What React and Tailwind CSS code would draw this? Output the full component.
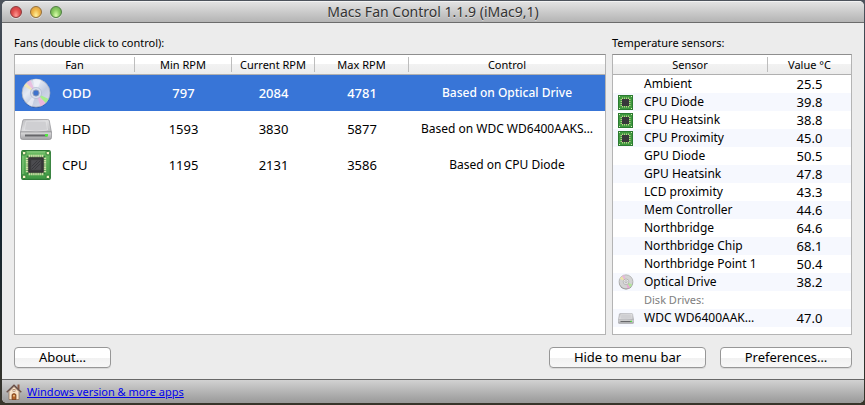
import React from "react";

function DiscIcon({ className }) {
  return (
    <svg viewBox="0 0 30 30" className={className} aria-hidden="true">
      <defs>
        <linearGradient id="disc" x1="0" y1="0" x2="1" y2="1">
          <stop offset="0" stopColor="#b9c3da" />
          <stop offset="0.35" stopColor="#e6eaf3" />
          <stop offset="0.6" stopColor="#c3cce0" />
          <stop offset="1" stopColor="#dfe4ee" />
        </linearGradient>
      </defs>
      <circle cx="15" cy="15.6" r="14.2" fill="#22325a" opacity="0.35" />
      <circle cx="15" cy="15" r="14" fill="url(#disc)" stroke="#a9afbd" strokeWidth="0.7" />
      <path d="M15 15 L3 8 A14 14 0 0 1 5.5 5 Z" fill="#f1e6b4" />
      <path d="M15 15 L5.5 5 A14 14 0 0 1 9.5 2.2 Z" fill="#e9bfe0" />
      <path d="M15 15 L27.6 21 A14 14 0 0 1 24.5 25 Z" fill="#a6ee8c" />
      <path d="M15 15 L24.5 25 A14 14 0 0 1 19.5 28.2 Z" fill="#ecb6dc" />
      <path d="M15 15 L12 1.4 A14 14 0 0 1 20 2 Z" fill="#f5f7fb" opacity="0.7" />
      <path d="M15 15 L11 28.4 A14 14 0 0 1 6 25.6 Z" fill="#f5f7fb" opacity="0.6" />
      <circle cx="15" cy="15" r="5.6" fill="#d9dfec" stroke="#aab4cb" strokeWidth="0.6" />
      <circle cx="15" cy="15" r="3.1" fill="#3f73cd" stroke="#8d9bb8" strokeWidth="1" />
    </svg>
  );
}

function SmallDiscIcon() {
  return (
    <svg viewBox="0 0 16 16" className="block size-4" aria-hidden="true">
      <circle cx="8" cy="8.6" r="7" fill="#8b8b8b" />
      <circle cx="8" cy="7.8" r="7" fill="#d3d3d3" stroke="#a3a3a3" strokeWidth="0.6" />
      <path d="M8 7.8 L1.8 4.8 A7 7 0 0 1 4 2.2 Z" fill="#eee3a8" />
      <path d="M8 7.8 L4 2.2 A7 7 0 0 1 6.5 1.1 Z" fill="#e7b8d9" />
      <path d="M8 7.8 L14.2 10.6 A7 7 0 0 1 12 13.4 Z" fill="#b2e59b" />
      <path d="M8 7.8 L12 13.4 A7 7 0 0 1 9.6 14.5 Z" fill="#e7a8d2" />
      <circle cx="8" cy="7.8" r="2.8" fill="#ececec" stroke="#a0a0a0" strokeWidth="0.6" />
      <circle cx="8" cy="7.8" r="1.1" fill="#fff" stroke="#888" strokeWidth="0.6" />
    </svg>
  );
}

function DriveIcon({ className }) {
  return (
    <svg viewBox="0 0 32 21" className={className} aria-hidden="true">
      <defs>
        <linearGradient id="driveTop" x1="0" y1="0" x2="1" y2="1">
          <stop offset="0" stopColor="#bdbdc0" />
          <stop offset="0.5" stopColor="#dedee0" />
          <stop offset="1" stopColor="#b9b9bc" />
        </linearGradient>
        <linearGradient id="driveFront" x1="0" y1="0" x2="0" y2="1">
          <stop offset="0" stopColor="#dededf" />
          <stop offset="1" stopColor="#a2a2a5" />
        </linearGradient>
      </defs>
      <path d="M4.2 0.5 H27.8 Q29 0.5 29.3 1.8 L31.4 13 H0.6 L2.7 1.8 Q3 0.5 4.2 0.5 Z" fill="url(#driveTop)" stroke="#8f8f93" strokeWidth="0.7" />
      <path d="M6 2.2 H26 L27.6 11 Q16 13.5 4.4 11 Z" fill="#cfcfd2" stroke="#e6e6e8" strokeWidth="0.6" />
      <path d="M0.5 13 H31.5 V18.5 Q31.5 20.5 29.5 20.5 H2.5 Q0.5 20.5 0.5 18.5 Z" fill="url(#driveFront)" stroke="#8c8c90" strokeWidth="0.7" />
      <rect x="5" y="15.5" width="22" height="2" fill="#66676a" />
      <rect x="25" y="15" width="3" height="2.5" fill="#51e83f" />
    </svg>
  );
}

const pins = [8.5, 10.5, 12.5, 14.5, 16.5, 18.5, 20.5, 22.5];

function ChipIcon() {
  return (
    <svg viewBox="0 0 31 31" className="mx-auto block h-[30px] w-[30px]" aria-hidden="true">
      <defs>
        <linearGradient id="board" x1="0" y1="0" x2="0" y2="1">
          <stop offset="0" stopColor="#6dbb64" />
          <stop offset="1" stopColor="#3f9843" />
        </linearGradient>
      </defs>
      <path
        d="M2 0.7 H29 Q30.3 0.7 30.3 2 V29 Q30.3 30.3 29 30.3 H2 Q0.7 30.3 0.7 29 V2 Q0.7 0.7 2 0.7 Z"
        fill="url(#board)"
        stroke="#2d7a35"
        strokeWidth="1.2"
      />
      <path d="M6 2 H25 M2 6 V25" stroke="#93d388" strokeWidth="0.9" />
      {[1.5, 26].map((x) =>
        [1.5, 26].map((y) => (
          <rect key={x + "-" + y} x={x} y={y} width="3.5" height="3.5" rx="0.8" fill="#f8f4c4" stroke="#2d7a35" strokeWidth="1" />
        ))
      )}
      <rect x="6" y="6" width="19" height="19" fill="#2f7d35" />
      {pins.map((p) => (
        <path key={p} d={`M${p} 5 V26 M5 ${p} H26`} stroke="#fbf6c8" strokeWidth="1.1" />
      ))}
      <rect x="8" y="8" width="15" height="15" fill="#39393b" stroke="#1f1f21" strokeWidth="0.8" />
      <rect x="10.5" y="10.5" width="10" height="10" fill="#4c4c50" />
      <path d="M11 17 L17 11 M11 20 L20 11 M14 20 L20 14" stroke="#37373a" strokeWidth="1" />
    </svg>
  );
}

function SmallChipIcon() {
  return (
    <svg viewBox="0 0 15 15" className="block h-[15px] w-[15px]" aria-hidden="true">
      <rect x="0.5" y="0.5" width="14" height="14" fill="#3f9a3f" stroke="#2c7a31" />
      <path d="M1 1.5 h1 M13 1.5 h1 M1 13.5 h1 M13 13.5 h1" stroke="#d6ecb8" />
      <path
        d="M4.5 2.5 V12.5 M6.5 2.5 V12.5 M8.5 2.5 V12.5 M10.5 2.5 V12.5 M2.5 4.5 H12.5 M2.5 6.5 H12.5 M2.5 8.5 H12.5 M2.5 10.5 H12.5"
        stroke="#ddd9a0"
        strokeWidth="0.8"
      />
      <rect x="4" y="4" width="7" height="7" fill="#38383a" />
    </svg>
  );
}

function HouseIcon() {
  return (
    <svg viewBox="0 0 16 16" className="block size-4" aria-hidden="true">
      <rect x="11.5" y="0.5" width="2" height="5" fill="#8a5a45" />
      <path d="M3 7.5 L8 2.5 L13 7.5 V15.5 H3 Z" fill="#f8e3ca" stroke="#8c6a50" strokeWidth="0.7" />
      <path d="M0.7 8.3 L8 1.2 L15.3 8.3" fill="none" stroke="#6a5048" strokeWidth="1.4" />
      <rect x="7" y="5.5" width="2" height="2" fill="#fff" stroke="#9a6a48" strokeWidth="0.6" />
      <path d="M6 15.5 V10.5 Q8 8.5 10 10.5 V15.5 Z" fill="#b5652c" stroke="#6b3a1c" strokeWidth="0.7" />
      <rect x="7" y="11" width="2" height="1.5" fill="#e9b97c" />
    </svg>
  );
}

const fans = [
  { icon: <DiscIcon className="mx-auto block h-[30px] w-[30px]" />, name: "ODD", min: "797", current: "2084", max: "4781", control: "Based on Optical Drive", selected: true },
  { icon: <DriveIcon className="block h-[21px] w-8" />, name: "HDD", min: "1593", current: "3830", max: "5877", control: "Based on WDC WD6400AAKS…" },
  { icon: <ChipIcon />, name: "CPU", min: "1195", current: "2131", max: "3586", control: "Based on CPU Diode" },
];

const sensors = [
  { name: "Ambient", value: "25.5" },
  { name: "CPU Diode", value: "39.8", icon: <SmallChipIcon /> },
  { name: "CPU Heatsink", value: "38.8", icon: <SmallChipIcon /> },
  { name: "CPU Proximity", value: "45.0", icon: <SmallChipIcon /> },
  { name: "GPU Diode", value: "50.5" },
  { name: "GPU Heatsink", value: "47.8" },
  { name: "LCD proximity", value: "43.3" },
  { name: "Mem Controller", value: "44.6" },
  { name: "Northbridge", value: "64.6" },
  { name: "Northbridge Chip", value: "68.1" },
  { name: "Northbridge Point 1", value: "50.4" },
  { name: "Optical Drive", value: "38.2", icon: <SmallDiscIcon /> },
  { name: "Disk Drives:", value: "", heading: true },
  { name: "WDC WD6400AAK…", value: "47.0", icon: <DriveIcon className="block h-[11px] w-4" /> },
];

function HeaderCell({ children, last }) {
  return (
    <th scope="col" className="h-5 border-b border-[#b0b0b0] bg-linear-to-b from-white from-50% via-[#f2f2f2] via-50% to-[#ececec] p-0 py-[2px] text-[11px] font-normal">
      <span className={last ? "block h-[15px] leading-[15px]" : "block h-[15px] border-r border-[#bdbdbd] leading-[15px]"}>
        {children}
      </span>
    </th>
  );
}

function Light({ label, className }) {
  return (
    <button
      type="button"
      aria-label={label}
      className={"size-3 rounded-full border shadow-[0_1px_0_rgba(255,255,255,0.5)] " + className}
    />
  );
}

function PushButton({ children, className }) {
  return (
    <button
      type="button"
      className={
        "h-[21px] rounded border border-[#979797] bg-linear-to-b from-white from-50% via-[#f1f1f1] via-50% to-[#f7f7f7] text-[13px] leading-[19px] shadow-[0_1px_0_rgba(0,0,0,0.08)] " +
        className
      }
    >
      {children}
    </button>
  );
}

export default function App() {
  return (
    <div className="min-h-screen bg-linear-to-b from-[#4d535c] via-[#0d2230] to-[#38352b] pt-px pr-px pb-[2px] pl-[2px] font-['Noto_Sans','Lucida_Grande',sans-serif] text-black">
      <main className="flex min-h-[calc(100vh-3px)] flex-col overflow-hidden rounded-[5px] bg-[#ececec]">
        <header className="grid h-[22px] shrink-0 grid-cols-[1fr_auto_1fr] items-center border-t border-b border-t-[#f2f2f2] border-b-[#6c6c6c] bg-linear-to-b from-[#e2e2e2] to-[#b4b4b4]">
          <div className="flex gap-2 pl-2">
            <Light label="Close" className="border-[#8c3a3c] bg-radial-[at_50%_85%] from-[#ff9c96] via-[#e2504f] to-[#c23a3e]" />
            <Light label="Minimize" className="border-[#94703a] bg-radial-[at_50%_85%] from-[#fff3a0] via-[#f0b84a] to-[#d29340]" />
            <Light label="Zoom" className="border-[#4f7f41] bg-radial-[at_50%_85%] from-[#dcffae] via-[#8bcb62] to-[#62a14b]" />
          </div>
          <h1 className="text-sm leading-5 text-[#333] text-shadow-[0_1px_0_rgba(255,255,255,0.5)]">
            Macs Fan Control 1.1.9 (iMac9,1)
          </h1>
        </header>

        <div className="flex grow flex-col gap-3 px-3 pt-3 pb-[11px]">
          <div className="flex grow gap-[6px]">
            <section className="flex min-w-0 flex-1 flex-col gap-1">
              <h2 id="fans" className="text-[11px] leading-[15px]">Fans (double click to control):</h2>
              <div className="grow border border-[#b4b4b4] border-t-[#8e8e8e] bg-white">
                <table aria-labelledby="fans" className="w-full table-fixed border-separate border-spacing-0 text-center">
                  <colgroup>
                    <col className="w-[120px]" />
                    <col className="w-[97px]" />
                    <col className="w-[83px]" />
                    <col className="w-[94px]" />
                    <col />
                  </colgroup>
                  <thead>
                    <tr>
                      <HeaderCell>Fan</HeaderCell>
                      <HeaderCell>Min RPM</HeaderCell>
                      <HeaderCell>Current RPM</HeaderCell>
                      <HeaderCell>Max RPM</HeaderCell>
                      <HeaderCell last>Control</HeaderCell>
                    </tr>
                  </thead>
                  <tbody className="text-[13px] leading-[18px]">
                    {fans.map((f) => (
                      <tr key={f.name} className={f.selected ? "bg-[#3875d7] font-medium text-white" : ""}>
                        <td className="h-9 p-0 pl-[5px] text-left">
                          <div className="flex items-center gap-[10px]">
                            <span className="w-8">{f.icon}</span>
                            {f.name}
                          </div>
                        </td>
                        <td className="p-0">{f.min}</td>
                        <td className="p-0">{f.current}</td>
                        <td className="p-0">{f.max}</td>
                        <td className="truncate p-0 text-xs">{f.control}</td>
                      </tr>
                    ))}
                  </tbody>
                </table>
              </div>
            </section>

            <section className="flex w-60 shrink-0 flex-col gap-1">
              <h2 id="sensors" className="text-[11px] leading-[15px]">Temperature sensors:</h2>
              <div className="grow border border-[#b4b4b4] border-t-[#8e8e8e] bg-white">
                <table aria-labelledby="sensors" className="w-full table-fixed border-separate border-spacing-0">
                  <colgroup>
                    <col />
                    <col className="w-[83px]" />
                  </colgroup>
                  <thead>
                    <tr>
                      <HeaderCell>Sensor</HeaderCell>
                      <HeaderCell last>Value °C</HeaderCell>
                    </tr>
                  </thead>
                  <tbody className="text-[13px] leading-[18px]">
                    {sensors.map((s) => (
                      <tr key={s.name} className="even:bg-[#f6f8fe]">
                        <td className="h-[18px] p-0 pl-[5px]">
                          <div className="flex h-[18px] items-center gap-[10px]">
                            <span className="w-4">{s.icon}</span>
                            <span className={s.heading ? "text-[11px] text-[#808080]" : "text-xs"}>{s.name}</span>
                          </div>
                        </td>
                        <td className="p-0 text-center">{s.value}</td>
                      </tr>
                    ))}
                  </tbody>
                </table>
              </div>
            </section>
          </div>

          <div className="flex gap-[14px]">
            <PushButton className="mr-auto w-[97px]">About…</PushButton>
            <PushButton className="w-[157px]">Hide to menu bar</PushButton>
            <PushButton className="w-[132px]">Preferences…</PushButton>
          </div>
        </div>

        <footer className="flex h-6 shrink-0 items-center gap-[5px] border-t border-[#686868] bg-linear-to-b from-[#d2d2d2] to-[#999] pl-1">
          <HouseIcon />
          <a href="#apps" className="text-[11px] leading-4 text-[#0000ee] underline">Windows version &amp; more apps</a>
        </footer>
      </main>
    </div>
  );
}
